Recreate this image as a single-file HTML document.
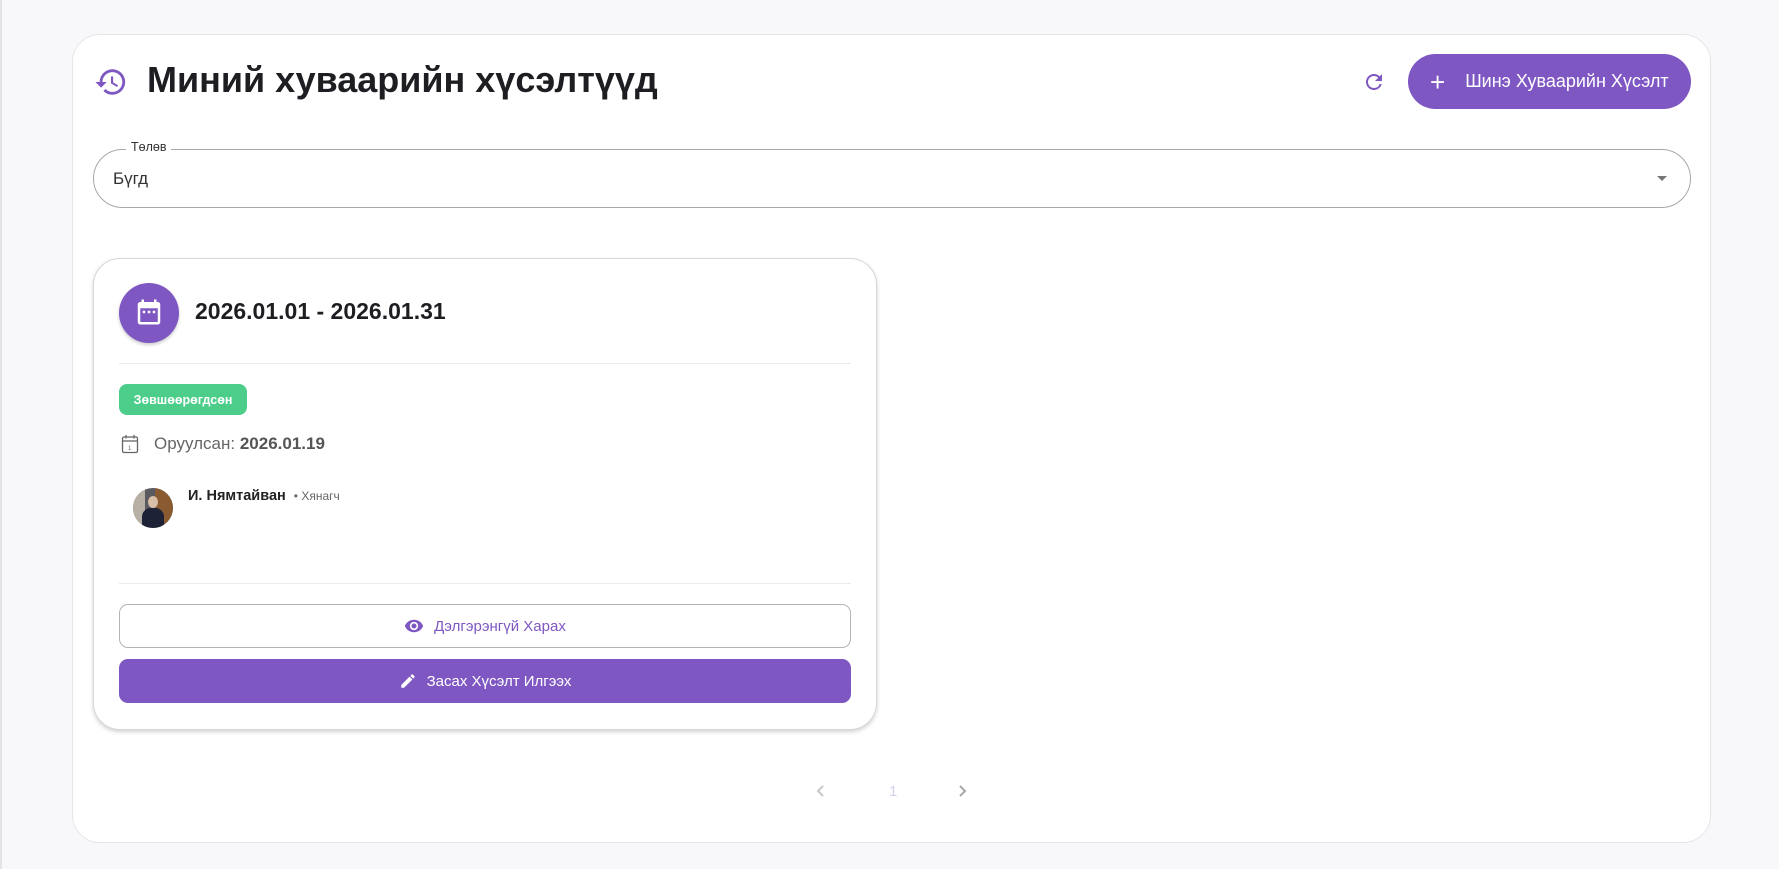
<!DOCTYPE html>
<html><head><meta charset="utf-8"><style>
*{box-sizing:border-box;margin:0;padding:0}
body{width:1779px;height:869px;background:#f8f8fa;font-family:"Liberation Sans",sans-serif;position:relative;overflow:hidden}
.abs{position:absolute}
.panel{left:72px;top:34px;width:1639px;height:809px;background:#fff;border:1px solid #e6e6ea;border-radius:28px}
.title{left:147px;top:59px;font-size:36px;font-weight:bold;color:#1e1e22}
.btn{left:1408px;top:54px;width:283px;height:55px;background:#7e57c2;border-radius:28px;color:#fff;font-size:18px;display:flex;align-items:center;padding-left:22px}
.sel{left:93px;top:149px;width:1598px;height:59px;border:1px solid #a8a8a8;border-radius:30px}
.card{left:93px;top:258px;width:784px;height:472px;background:#fff;border:1px solid #d8d8dc;border-radius:27px;box-shadow:0 2px 4px rgba(0,0,0,.18)}
.hr{height:1px;background:#eaeaec}
.b1{left:119px;top:604px;width:732px;height:44px;border:1px solid #b4b4b8;border-radius:9px;color:#7e57c2;font-size:15px;display:flex;align-items:center;justify-content:center;gap:10px}
.b2{left:119px;top:659px;width:732px;height:44px;background:#7e57c2;border-radius:9px;color:#fff;font-size:15px;display:flex;align-items:center;justify-content:center;gap:10px}
</style></head><body>
<div class="abs" style="left:0;top:0;width:2px;height:869px;background:#e4e4e8"></div>
<div class="abs panel"></div>
<svg class="abs" style="left:94px;top:65px" width="34" height="34" viewBox="0 0 24 24"><path fill="#7e57c2" d="M13 3a9 9 0 0 0-9 9H1l3.89 3.89.07.14L9 12H6c0-3.870 3.13-7 7-7s7 3.13 7 7-3.13 7-7 7c-1.93 0-3.68-.79-4.94-2.06l-1.42 1.42A8.954 8.954 0 0 0 13 21a9 9 0 0 0 0-18zm-1 5v5l4.28 2.54.72-1.21-3.5-2.08V8H12z"/></svg>
<div class="abs title">Миний хуваарийн хүсэлтүүд</div>
<svg class="abs" style="left:1362px;top:70px" width="24" height="24" viewBox="0 0 24 24"><path fill="#7e57c2" d="M17.65 6.35A7.958 7.958 0 0 0 12 4c-4.42 0-7.99 3.580-7.99 8s3.57 8 7.99 8c3.73 0 6.84-2.55 7.73-6h-2.08A5.99 5.99 0 0 1 12 18c-3.31 0-6-2.69-6-6s2.69-6 6-6c1.66 0 3.14.69 4.22 1.78L13 11h7V4l-2.35 2.35z"/></svg>
<div class="abs btn"><span style="font-size:26px;font-weight:300;margin-right:20px;line-height:1">+</span>Шинэ Хуваарийн Хүсэлт</div>
<div class="abs sel"></div>
<div class="abs" style="left:126px;top:140px;background:#fff;padding:0 5px;font-size:12.5px;color:#333">Төлөв</div>
<div class="abs" style="left:113px;top:169px;font-size:17px;color:#333">Бүгд</div>
<div class="abs" style="left:1657px;top:176px;width:0;height:0;border-left:5px solid transparent;border-right:5px solid transparent;border-top:5px solid #777"></div>
<div class="abs card"></div>
<div class="abs" style="left:119px;top:283px;width:60px;height:60px;border-radius:50%;background:#7e57c2;box-shadow:0 2px 3px rgba(0,0,0,.2)"></div>
<svg class="abs" style="left:134px;top:297px" width="30" height="30" viewBox="0 0 24 24"><path fill="#fff" d="M19 4h-1V2h-2v2H8V2H6v2H5c-1.1 0-2 .9-2 2v14c0 1.1.9 2 2 2h14c1.1 0 2-.9 2-2V6c0-1.1-.9-2-2-2zm0 16H5V9h14v11zM7 11h2v2H7zm4 0h2v2h-2zm4 0h2v2h-2z"/></svg>
<div class="abs" style="left:195px;top:298px;font-size:23px;font-weight:bold;color:#1e1e22">2026.01.01 - 2026.01.31</div>
<div class="abs hr" style="left:119px;top:363px;width:732px"></div>
<div class="abs" style="left:119px;top:384px;width:128px;height:31px;background:#4ccd8a;border-radius:8px;color:#fff;font-size:12.5px;font-weight:bold;display:flex;align-items:center;justify-content:center">Зөвшөөрөгдсөн</div>
<svg class="abs" style="left:121px;top:434px" width="18" height="20" viewBox="0 0 18 20"><rect x="1.5" y="3" width="15" height="15.5" rx="1.5" fill="none" stroke="#666" stroke-width="1.3"/><line x1="1.5" y1="7" x2="16.5" y2="7" stroke="#666" stroke-width="1.3"/><line x1="5" y1="1" x2="5" y2="4.5" stroke="#666" stroke-width="1.3"/><line x1="13" y1="1" x2="13" y2="4.5" stroke="#666" stroke-width="1.3"/><text x="7" y="16" font-size="6" fill="#666" font-family="Liberation Sans">1</text></svg>
<div class="abs" style="left:154px;top:434px;font-size:17px;color:#666">Оруулсан: <b style="color:#555">2026.01.19</b></div>
<div class="abs" style="left:133px;top:488px;width:40px;height:40px;border-radius:50%;overflow:hidden;background:#5a5a60">
<div class="abs" style="left:22px;top:0;width:18px;height:40px;background:#8a5a30"></div>
<div class="abs" style="left:0;top:0;width:12px;height:40px;background:#b8b0a4"></div>
<div class="abs" style="left:15px;top:8px;width:10px;height:12px;border-radius:50%;background:#d8c0a8"></div>
<div class="abs" style="left:9px;top:20px;width:22px;height:22px;border-radius:40% 40% 0 0;background:#1e2236"></div>
</div>
<div class="abs" style="left:188px;top:488px;font-size:14.5px;font-weight:bold;color:#222">И. Нямтайван <span style="font-weight:normal;font-size:12px;color:#666;margin-left:4px">• Хянагч</span></div>
<div class="abs hr" style="left:119px;top:583px;width:732px"></div>
<div class="abs b1"><svg width="20" height="20" viewBox="0 0 24 24"><path fill="#7e57c2" d="M12 4.5C7 4.5 2.73 7.61 1 12c1.73 4.39 6 7.5 11 7.5s9.27-3.11 11-7.5c-1.73-4.39-6-7.5-11-7.5zM12 17a5 5 0 1 1 0-10 5 5 0 0 1 0 10zm0-8a3 3 0 1 0 0 6 3 3 0 0 0 0-6z"/></svg>Дэлгэрэнгүй Харах</div>
<div class="abs b2"><svg width="18" height="18" viewBox="0 0 24 24"><path fill="#fff" d="M3 17.25V21h3.75L17.81 9.94l-3.75-3.75L3 17.25zM20.71 7.04a1 1 0 0 0 0-1.41l-2.34-2.34a1 1 0 0 0-1.41 0l-1.830 1.83 3.75 3.75 1.83-1.83z"/></svg>Засах Хүсэлт Илгээх</div>
<svg class="abs" style="left:815px;top:783px" width="12" height="16" viewBox="0 0 12 16"><path d="M8 3 3 8l5 5" fill="none" stroke="#c8c8cc" stroke-width="2"/></svg>
<div class="abs" style="left:889px;top:783px;font-size:15px;color:#d8d0ea">1</div>
<svg class="abs" style="left:956px;top:783px" width="12" height="16" viewBox="0 0 12 16"><path d="M4 3l5 5-5 5" fill="none" stroke="#a8a8ac" stroke-width="2"/></svg>
</body></html>
